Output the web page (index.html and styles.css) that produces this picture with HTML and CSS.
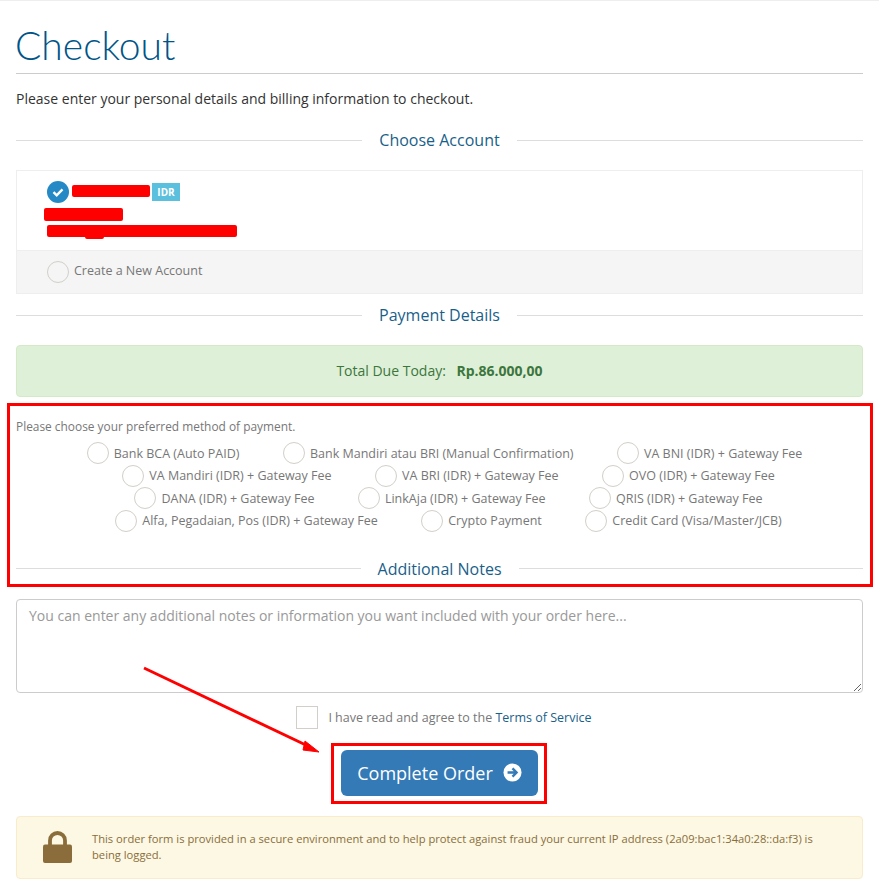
FILE: index.html
```html
<!DOCTYPE html>
<html lang="en">

<head>
    <meta charset="UTF-8">
    <title>Checkout</title>
    <meta name="viewport" content="width=device-width, initial-scale=1.0">
    <link rel="stylesheet" href="styles.css">
</head>

<body>

    <div class="page">
        <div class="header-lined">
            <h1>Checkout</h1>
        </div>
        <p class="intro">Please enter your personal details and billing information to checkout.</p>

        <div class="sub-heading"><span>Choose Account</span></div>

        <div class="account-list">
            <div class="account selected">
                <div class="account-name">
                    <span class="check-circle">
                        <svg viewBox="0 0 22 22" width="22" height="22"><path d="M6.500 11.200l3.200 3.200 5.800-6" fill="none" stroke="#fff" stroke-width="2.400"/></svg>
                    </span>
                    <span class="scribble scribble-name"></span>
                    <span class="label-idr">IDR</span>
                </div>
                <div class="scribble scribble-company"></div>
                <div class="scribble scribble-address"></div>
            </div>
            <div class="account new-account">
                <span class="radio"></span>
                <span>Create a New Account</span>
            </div>
        </div>

        <div class="sub-heading payment-heading"><span>Payment Details</span></div>

        <div class="total-due">Total Due Today: <strong>Rp.86.000,00</strong></div>

        <p class="method-prompt">Please choose your preferred method of payment.</p>
        <div class="methods">
            <label class="method"><span class="radio"></span>Bank BCA (Auto PAID)</label>
            <label class="method"><span class="radio"></span>Bank Mandiri atau BRI (Manual Confirmation)</label>
            <label class="method"><span class="radio"></span>VA BNI (IDR) + Gateway Fee</label>
            <label class="method"><span class="radio"></span>VA Mandiri (IDR) + Gateway Fee</label>
            <label class="method"><span class="radio"></span>VA BRI (IDR) + Gateway Fee</label>
            <label class="method"><span class="radio"></span>OVO (IDR) + Gateway Fee</label>
            <label class="method"><span class="radio"></span>DANA (IDR) + Gateway Fee</label>
            <label class="method"><span class="radio"></span>LinkAja (IDR) + Gateway Fee</label>
            <label class="method"><span class="radio"></span>QRIS (IDR) + Gateway Fee</label>
            <label class="method"><span class="radio"></span>Alfa, Pegadaian, Pos (IDR) + Gateway Fee</label>
            <label class="method"><span class="radio"></span>Crypto Payment</label>
            <label class="method"><span class="radio"></span>Credit Card (Visa/Master/JCB)</label>
        </div>

        <div class="sub-heading notes-heading"><span>Additional Notes</span></div>

        <textarea class="notes" placeholder="You can enter any additional notes or information you want included with your order here..."></textarea>

        <div class="terms">
            <span class="checkbox"></span>
            <span>I have read and agree to the <a href="#">Terms of Service</a></span>
        </div>

        <div class="submit-row">
            <button class="btn-order">Complete Order
                <svg viewBox="0 0 20 20" width="19" height="19"><circle cx="10" cy="10" r="9.500" fill="#fff"/><path d="M4.800 10h9M10 5.600l4.300 4.400-4.300 4.400" fill="none" stroke="#337ab7" stroke-width="2.500"/></svg>
            </button>
        </div>

        <div class="secure-alert">
            <svg class="lock" viewBox="0 0 29 32" width="29" height="32"><path d="M7 15V9.500a7.500 7.500 0 0 1 15 0V15" fill="none" stroke="#8a6d3b" stroke-width="3.800"/><rect x="0" y="13.500" width="29" height="18.500" rx="2" fill="#8a6d3b"/></svg>
            <p>This order form is provided in a secure environment and to help protect against fraud your current IP address (2a09:bac1:34a0:28::da:f3) is being logged.</p>
        </div>
    </div>

    <!-- red markup drawn on top of the screenshot -->
    <div class="mark mark-methods"></div>
    <div class="mark mark-button"></div>
    <svg class="mark-arrow" viewBox="0 0 879 889" width="879" height="889">
        <path d="M144 668L310 747" stroke="#f00" stroke-width="3" fill="none"/>
        <path d="M319 752L305 741L303 750Z" fill="#f00" stroke="#f00" stroke-width="1"/>
    </svg>

</body>
</html>
```

FILE: styles.css
```css
* {
    box-sizing: border-box;
    margin: 0;
    padding: 0;
}

html, body {
    width: 100%;
    height: 100%;
    overflow: hidden;
    background: #fff;
    font-family: 'Open Sans', 'Liberation Sans', sans-serif;
    font-size: 14px;
    color: #333;
}

.page {
    padding: 0 16px;
    border-top: 1px solid #eee;
}

.header-lined {
    height: 73px;
    border-bottom: 1px solid #ccc;
}

h1 {
    padding-top: 21px;
    margin-left: -1px;
    font-family: Lato, 'Open Sans', sans-serif;
    font-size: 39px;
    line-height: 46px;
    font-weight: 300;
    color: #005488;
}

.intro {
    margin-top: 15px;
    line-height: 20px;
}

.sub-heading {
    display: flex;
    align-items: center;
    gap: 17px;
    margin-top: 20px;
    height: 22px;
    font-size: 16px;
    color: #1a5f8a;
}

.sub-heading::before,
.sub-heading::after {
    content: "";
    flex: 1;
    height: 1px;
    background: #ddd;
}

.account-list {
    margin-top: 19px;
    border: 1px solid #eee;
}

.account.selected {
    height: 79px;
    padding: 10px 0 0 30px;
}

.account-name {
    display: flex;
    align-items: center;
    height: 22px;
}

.check-circle {
    width: 22px;
    height: 22px;
    border-radius: 50%;
    background: #2489c5;
}

.check-circle svg {
    display: block;
}

.scribble {
    height: 12px;
    border-radius: 2px;
    background: #f00;
}

.scribble-name {
    width: 78px;
    margin: -2px 2px 0 3px;
}

.label-idr {
    width: 28px;
    height: 18px;
    background: #5bc0de;
    color: #fff;
    font-size: 10px;
    font-weight: 700;
    line-height: 18px;
    text-align: center;
}

.scribble-company {
    width: 79px;
    height: 13px;
    margin: 5px 0 0 -3px;
}

.scribble-address {
    position: relative;
    width: 190px;
    margin-top: 4px;
}

.scribble-address::after {
    content: "";
    position: absolute;
    left: 38px;
    bottom: -2px;
    width: 19px;
    height: 4px;
    background: #f00;
    border-radius: 2px;
}

.new-account {
    display: flex;
    align-items: center;
    gap: 5px;
    height: 43px;
    padding-left: 30px;
    background: #f5f5f5;
    border-top: 1px solid #eee;
    font-size: 12.5px;
    color: #777;
}

.new-account span:last-child {
    margin-bottom: 3px;
}

.radio {
    flex: none;
    display: inline-block;
    width: 22px;
    height: 22px;
    border: 1px solid #d3cfc8;
    border-radius: 50%;
    background: #fff;
}

.new-account .radio {
    background: transparent;
}

.payment-heading {
    margin-top: 10px;
}

.total-due {
    margin-top: 19px;
    height: 52px;
    border: 1px solid #d6e9c6;
    border-radius: 4px;
    background: #dff0d8;
    color: #3c763d;
    line-height: 50px;
    text-align: center;
}

.total-due strong {
    margin-left: 7px;
}

.method-prompt {
    margin-top: 21px;
    font-size: 11.9px;
    line-height: 16px;
    color: #777;
}

.methods {
    display: flex;
    flex-wrap: wrap;
    justify-content: center;
    column-gap: 43.5px;
    margin-top: 8px;
    padding-left: 18px;
    font-size: 12.5px;
    color: #777;
}

.method {
    display: flex;
    align-items: center;
    gap: 5px;
    height: 22.5px;
}

/* first row sits a little further left than the others */
.method:nth-child(3) {
    margin-right: 8px;
}

.notes-heading {
    margin-top: 25.700px;
}

.notes {
    display: block;
    width: 100%;
    height: 94px;
    margin-top: 19px;
    padding: 6px 12px;
    border: 1px solid #ccc;
    border-radius: 4px;
    font-family: inherit;
    font-size: 14px;
    line-height: 20px;
    color: #555;
}

.notes::placeholder {
    color: #999;
}

.terms {
    display: flex;
    align-items: center;
    justify-content: center;
    gap: 10px;
    margin-top: 13px;
    padding-left: 9px;
    height: 23px;
    font-size: 12.5px;
    color: #777;
}

.terms a {
    color: #1a5f8a;
    text-decoration: none;
}

.checkbox {
    width: 22px;
    height: 23px;
    border: 1px solid #d3cfc8;
}

.submit-row {
    display: flex;
    justify-content: center;
    margin-top: 21px;
}

.btn-order {
    display: flex;
    align-items: center;
    gap: 10px;
    height: 46px;
    padding: 0 16px;
    border: none;
    border-radius: 6px;
    background: #337ab7;
    color: #fff;
    font-family: inherit;
    font-size: 18px;
}

.secure-alert {
    display: flex;
    align-items: center;
    gap: 20px;
    margin-top: 20px;
    height: 63px;
    padding: 0 26px;
    border: 1px solid #faebcc;
    border-radius: 4px;
    background: #fcf8e3;
    color: #8a6d3b;
    font-size: 11.2px;
    line-height: 16px;
}

.secure-alert p {
    max-width: 726px;
}

.lock {
    flex: none;
}

.mark {
    position: absolute;
    border: 3px solid #f00;
}

.mark-methods {
    left: 7px;
    top: 403px;
    width: 866px;
    height: 184px;
}

.mark-button {
    left: 331px;
    top: 743px;
    width: 216px;
    height: 61px;
}

.mark-arrow {
    position: absolute;
    left: 0;
    top: 0;
    pointer-events: none;
}
```
